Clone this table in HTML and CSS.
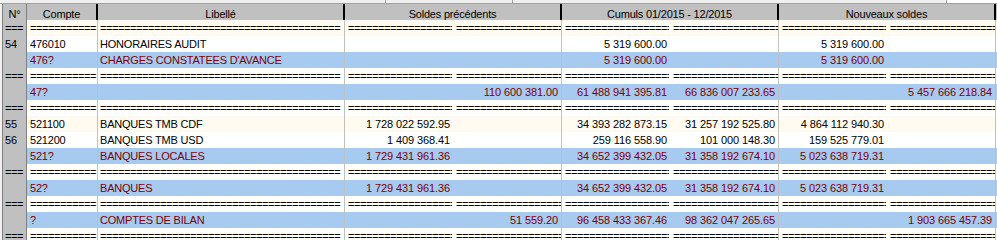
FILE: index.html
```html
<!DOCTYPE html>
<html lang="fr">
<head>
<meta charset="utf-8">
<title>Balance</title>
<link rel="stylesheet" href="styles.css">
</head>
<body>
<div class="top">
  <div class="seg s-a"></div>
  <div class="seg s-b"></div>
  <div class="seg s-c"></div>
  <div class="seg s-d"></div>
</div>
<div class="grid">
  <div class="hdr">
    <div class="h no">N°</div>
    <div class="h">Compte</div>
    <div class="h">Libellé</div>
    <div class="h">Soldes précédents</div>
    <div class="h">Cumuls 01/2015 - 12/2015</div>
    <div class="h">Nouveaux soldes</div>
  </div>

  <div class="row odd">
    <div class="c no eq">===</div><div class="c acc eq">===========</div><div class="c lib eq">========================================</div>
    <div class="c a eq">===================</div><div class="c b eq">===================</div><div class="c a eq">===================</div><div class="c b eq">===================</div><div class="c a eq">===================</div><div class="c b eq">===================</div>
  </div>

  <div class="row">
    <div class="c no">54</div><div class="c acc">476010</div><div class="c lib">HONORAIRES AUDIT</div>
    <div class="c a"></div><div class="c b"></div><div class="c a">5 319 600.00</div><div class="c b"></div><div class="c a">5 319 600.00</div><div class="c b"></div>
  </div>

  <div class="row tot">
    <div class="c no"></div><div class="c acc">476?</div><div class="c lib">CHARGES CONSTATEES D'AVANCE</div>
    <div class="c a"></div><div class="c b"></div><div class="c a">5 319 600.00</div><div class="c b"></div><div class="c a">5 319 600.00</div><div class="c b"></div>
  </div>

  <div class="row">
    <div class="c no eq">===</div><div class="c acc eq">===========</div><div class="c lib eq">========================================</div>
    <div class="c a eq">===================</div><div class="c b eq">===================</div><div class="c a eq">===================</div><div class="c b eq">===================</div><div class="c a eq">===================</div><div class="c b eq">===================</div>
  </div>

  <div class="row tot">
    <div class="c no"></div><div class="c acc">47?</div><div class="c lib"></div>
    <div class="c a"></div><div class="c b">110 600 381.00</div><div class="c a">61 488 941 395.81</div><div class="c b">66 836 007 233.65</div><div class="c a"></div><div class="c b">5 457 666 218.84</div>
  </div>

  <div class="row">
    <div class="c no eq">===</div><div class="c acc eq">===========</div><div class="c lib eq">========================================</div>
    <div class="c a eq">===================</div><div class="c b eq">===================</div><div class="c a eq">===================</div><div class="c b eq">===================</div><div class="c a eq">===================</div><div class="c b eq">===================</div>
  </div>

  <div class="row odd">
    <div class="c no">55</div><div class="c acc">521100</div><div class="c lib">BANQUES TMB CDF</div>
    <div class="c a">1 728 022 592.95</div><div class="c b"></div><div class="c a">34 393 282 873.15</div><div class="c b">31 257 192 525.80</div><div class="c a">4 864 112 940.30</div><div class="c b"></div>
  </div>

  <div class="row">
    <div class="c no">56</div><div class="c acc">521200</div><div class="c lib">BANQUES TMB USD</div>
    <div class="c a">1 409 368.41</div><div class="c b"></div><div class="c a">259 116 558.90</div><div class="c b">101 000 148.30</div><div class="c a">159 525 779.01</div><div class="c b"></div>
  </div>

  <div class="row tot">
    <div class="c no"></div><div class="c acc">521?</div><div class="c lib">BANQUES LOCALES</div>
    <div class="c a">1 729 431 961.36</div><div class="c b"></div><div class="c a">34 652 399 432.05</div><div class="c b">31 358 192 674.10</div><div class="c a">5 023 638 719.31</div><div class="c b"></div>
  </div>

  <div class="row">
    <div class="c no eq">===</div><div class="c acc eq">===========</div><div class="c lib eq">========================================</div>
    <div class="c a eq">===================</div><div class="c b eq">===================</div><div class="c a eq">===================</div><div class="c b eq">===================</div><div class="c a eq">===================</div><div class="c b eq">===================</div>
  </div>

  <div class="row tot">
    <div class="c no"></div><div class="c acc">52?</div><div class="c lib">BANQUES</div>
    <div class="c a">1 729 431 961.36</div><div class="c b"></div><div class="c a">34 652 399 432.05</div><div class="c b">31 358 192 674.10</div><div class="c a">5 023 638 719.31</div><div class="c b"></div>
  </div>

  <div class="row">
    <div class="c no eq">===</div><div class="c acc eq">===========</div><div class="c lib eq">========================================</div>
    <div class="c a eq">===================</div><div class="c b eq">===================</div><div class="c a eq">===================</div><div class="c b eq">===================</div><div class="c a eq">===================</div><div class="c b eq">===================</div>
  </div>

  <div class="row tot">
    <div class="c no"></div><div class="c acc">?</div><div class="c lib">COMPTES DE BILAN</div>
    <div class="c a"></div><div class="c b">51 559.20</div><div class="c a">96 458 433 367.46</div><div class="c b">98 362 047 265.65</div><div class="c a"></div><div class="c b">1 903 665 457.39</div>
  </div>

  <div class="row">
    <div class="c no eq">===</div><div class="c acc eq">===========</div><div class="c lib eq">========================================</div>
    <div class="c a eq">===================</div><div class="c b eq">===================</div><div class="c a eq">===================</div><div class="c b eq">===================</div><div class="c a eq">===================</div><div class="c b eq">===================</div>
  </div>
</div>
</body>
</html>
```

FILE: styles.css
```css
html, body {
  margin: 0;
  padding: 0;
  overflow: hidden;
  background: #f0f0f0;
}

body {
  width: 997px;
  height: 240px;
  font-family: "Liberation Sans", Arial, sans-serif;
  font-size: 11px;
  color: #000;
}

.top {
  display: flex;
  height: 3px;
  border-bottom: 1px solid #a0a0a0;
}

.seg {
  box-sizing: border-box;
  background: #f0f0f0;
  border-right: 1px solid #a0a0a0;
}

.s-a { width: 386px; }
.s-b { width: 127px; }
.s-c { width: 434px; }
.s-d { flex: 1; background: #fff; border-right: none; }

.grid {
  margin-left: 2px;
  width: 994px;
  border-left: 1px solid #808080;
}

.hdr {
  display: grid;
  grid-template-columns: 24px 71px 247px 217px 217px 217px;
  height: 16px;
  background: #c0c0c0;
}

.h {
  box-sizing: border-box;
  border-right: 2px solid #000;
  text-align: center;
  padding-top: 4px;
  line-height: 12px;
  overflow: hidden;
  white-space: nowrap;
  letter-spacing: -0.2px;
}

.h.no {
  border-right: 1px solid #808080;
}

.row {
  display: grid;
  grid-template-columns: 24px 71px 247px 108px 109px 108px 109px 108px 109px;
  height: 16px;
  background: #fff;
}

.row.odd { background: #fffbf0; }

.row.tot {
  background: #a6caf0;
  color: #800000;
}

.c {
  box-sizing: border-box;
  overflow: hidden;
  white-space: nowrap;
  padding-top: 1px;
  line-height: 15px;
  border-right: 1px solid #c0c0c0;
  letter-spacing: -0.2px;
}

.c.no {
  background: #c0c0c0;
  border-right-color: #808080;
  padding-left: 2px;
  color: #000;
}

.c.acc { padding-left: 3px; }
.c.lib { padding-left: 2px; }

.c.a,
.c.b {
  text-align: right;
  padding-left: 3px;
  letter-spacing: -0.1px;
}

.c.a {
  border-right-color: transparent;
  padding-right: 2px;
}

.c.b { padding-right: 3px; }

.c.eq {
  text-align: left;
  letter-spacing: -0.42px;
}
```
